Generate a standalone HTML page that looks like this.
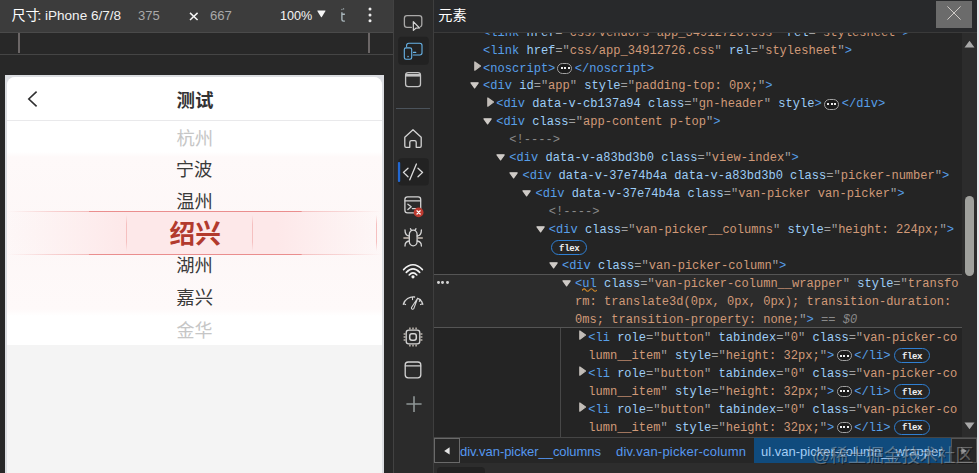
<!DOCTYPE html>
<html><head><meta charset="utf-8"><title>devtools</title>
<style>
html,body{margin:0;padding:0;background:#282828;}
body{width:979px;height:473px;position:relative;overflow:hidden;font-family:"Liberation Sans",sans-serif;}
.abs{position:absolute}
.ln{position:absolute;white-space:pre;font-family:"Liberation Mono",monospace;font-size:12.075px;line-height:18px;height:18px;letter-spacing:0}
.ln b{font-weight:normal}
.ln i{display:inline-block;width:7.245px;height:18px;font-style:normal;vertical-align:top;overflow:visible}
.ln b[style*="italic"] i{font-style:italic}
.t{color:#579fe8}.n{color:#9ccdf7}.v{color:#d19a78}.p{color:#a0a0a0}.m{color:#8a8a8a}
.flex{position:absolute;box-sizing:border-box;width:36.3px;height:15.4px;border:1.1px solid #2f7fd2;border-radius:7.7px;color:#efefef;font:bold 9.1px/13px "Liberation Mono",monospace;text-align:center;letter-spacing:-.42px;padding-left:.3px;padding-top:.9px}
.ui{position:absolute;white-space:pre;font-family:"Liberation Sans",sans-serif;}
</style></head><body>

<!-- ===== left pane ===== -->
<div class="abs" style="left:0;top:0;width:393px;height:473px;background:#282828"></div>
<div class="abs" style="left:0;top:0;width:393px;height:32px;background:#3c3c3c"></div>
<div class="abs" style="left:0;top:32px;width:393px;height:1px;background:#4a4a4a"></div>
<div class="abs" style="left:0;top:54px;width:393px;height:1px;background:#454545"></div>
<div class="abs" style="left:18px;top:33px;width:2px;height:20px;background:#6b6666"></div>
<div class="abs" style="left:368px;top:33px;width:2px;height:20px;background:#6b6666"></div>
<svg style="position:absolute;left:11.80px;top:8.50px;width:27.30px;height:12.60px;overflow:visible"><text x="-0.47" y="11.45" font-family="Liberation Sans, Noto Sans CJK SC, sans-serif" font-size="14" fill="#ffffff">尺寸</text></svg>
<svg class="abs" style="left:37.37px;top:4.00px;overflow:visible" width="6.67" height="21.60"><text x="0" y="16.20" textLength="4.67" lengthAdjust="spacingAndGlyphs" font-family="Liberation Sans, sans-serif" font-size="13.5" fill="#ececec">:</text></svg>
<svg class="abs" style="left:44.99px;top:4.00px;overflow:visible" width="78.10" height="21.60"><text x="0" y="16.20" textLength="76.10" lengthAdjust="spacingAndGlyphs" font-family="Liberation Sans, sans-serif" font-size="13.5" fill="#f2f2f2">iPhone 6/7/8</text></svg>
<svg class="abs" style="left:138.20px;top:4.00px;overflow:visible" width="23.74" height="21.60"><text x="0" y="16.20" textLength="21.74" lengthAdjust="spacingAndGlyphs" font-family="Liberation Sans, sans-serif" font-size="13.5" fill="#a9a9a9">375</text></svg>
<svg class="abs" style="left:210.23px;top:4.00px;overflow:visible" width="23.93" height="21.60"><text x="0" y="16.20" textLength="21.93" lengthAdjust="spacingAndGlyphs" font-family="Liberation Sans, sans-serif" font-size="13.5" fill="#a9a9a9">667</text></svg>
<svg class="abs" style="left:189px;top:12px" width="10" height="9" viewBox="0 0 10 9"><path d="M1 0.9 L8.6 8 M8.6 0.9 L1 8" stroke="#f4f4f4" stroke-width="1.5" fill="none"/></svg>
<svg class="abs" style="left:280.34px;top:4.00px;overflow:visible" width="34.31" height="21.60"><text x="0" y="16.20" textLength="32.31" lengthAdjust="spacingAndGlyphs" font-family="Liberation Sans, sans-serif" font-size="13.5" fill="#f4f4f4">100%</text></svg>
<svg class="abs" style="left:317px;top:10.2px" width="9" height="8" viewBox="0 0 9 8"><path d="M0.5 0.6 H8.3 Q8.7 0.6 8.5 1 L4.8 6.9 Q4.4 7.4 4 6.9 L0.3 1 Q0.1 0.6 0.5 0.6 Z" fill="#f6f6f6"/></svg>
<svg class="abs" style="left:339px;top:7px" width="8" height="16" viewBox="0 0 8 16"><path d="M2.9 5.3 V12.6 Q2.9 14.1 4.5 14.1 H5.9 M2.9 7.3 H5.9" stroke="#a9b6bb" stroke-width="1.4" fill="none"/><path d="M2.4 2.6 L5.8 1.5" stroke="#98a3a7" stroke-width="1.3" stroke-dasharray="1.1 .7" fill="none"/></svg>

<svg class="abs" style="left:366px;top:5px" width="8" height="20" viewBox="0 0 8 20"><circle cx="4" cy="4.1" r="1.5" fill="#ececec"/><circle cx="4" cy="10" r="1.5" fill="#ececec"/><circle cx="4" cy="15.8" r="1.5" fill="#ececec"/></svg>
<!-- device -->
<div class="abs" style="left:5px;top:75px;width:379px;height:398px;background:#dcdee2"></div>
<div class="abs" style="left:7px;top:77px;width:375px;height:396px;background:#f4f4f4;border-radius:8px 8px 0 0"></div>
<div class="abs" style="left:7px;top:77px;width:375px;height:44px;background:#fff;border-radius:8px 8px 0 0"></div>
<div class="abs" style="left:7px;top:120px;width:375px;height:1px;background:#e9e9eb"></div>
<svg class="abs" style="left:26px;top:89px" width="14" height="20" viewBox="0 0 14 20"><path d="M10.6 2.6 L2.8 10 L10.6 17.4" stroke="#2f2f30" stroke-width="1.6" fill="none"/></svg>
<!-- picker -->
<div class="abs" style="left:7px;top:121px;width:375px;height:223.5px;background:#fff"></div>
<div class="abs" style="left:7px;top:152px;width:375px;height:164px;background:linear-gradient(180deg,rgba(254,248,248,0) 0,#fef9f9 5px,#fdf7f7 50%,#fef9f9 calc(100% - 7px),rgba(254,248,248,0) 100%)"></div>
<div class="abs" style="left:7px;top:211.5px;width:375px;height:42.5px;background:linear-gradient(90deg,rgba(253,232,233,0) 0,rgba(253,232,233,.35) 12%,#fde8e9 32%,#fde8e9 72%,rgba(253,232,233,.35) 90%,rgba(253,232,233,0) 100%)"></div>
<div class="abs" style="left:7px;top:211px;width:375px;height:1px;background:linear-gradient(90deg,rgba(236,140,140,0) 0,rgba(236,140,140,.35) 12%,rgba(236,140,140,.55) 21.8%,#ea8e8e 21.9%,#ea8e8e 78.5%,rgba(236,140,140,.5) 78.6%,rgba(236,140,140,.3) 90%,rgba(236,140,140,0) 100%)"></div>
<div class="abs" style="left:7px;top:254px;width:375px;height:1px;background:linear-gradient(90deg,rgba(236,140,140,0) 0,rgba(236,140,140,.35) 12%,rgba(236,140,140,.55) 21.8%,#ea8e8e 21.9%,#ea8e8e 78.5%,rgba(236,140,140,.5) 78.6%,rgba(236,140,140,.3) 90%,rgba(236,140,140,0) 100%)"></div>
<div class="abs" style="left:126px;top:215px;width:1px;height:36px;background:linear-gradient(180deg,rgba(240,170,170,0),#f5c0c0 25%,#f5c0c0 75%,rgba(240,170,170,0))"></div>
<div class="abs" style="left:252px;top:215px;width:1px;height:36px;background:linear-gradient(180deg,rgba(240,170,170,0),#f5c0c0 25%,#f5c0c0 75%,rgba(240,170,170,0))"></div>
<div class="abs" style="left:376px;top:215px;width:1px;height:36px;background:linear-gradient(180deg,rgba(240,170,170,0),#f5c0c0 25%,#f5c0c0 75%,rgba(240,170,170,0))"></div>
<svg style="position:absolute;left:176.60px;top:91.00px;width:36.00px;height:17.21px;overflow:visible"><text x="-0.52" y="15.55" font-family="Liberation Sans, Noto Sans CJK SC, sans-serif" font-size="18.5" font-weight="bold" fill="#323233">测试</text></svg><svg style="position:absolute;left:176.90px;top:129.00px;width:34.30px;height:17.23px;overflow:visible"><text x="-0.59" y="15.63" font-family="Liberation Sans, Noto Sans CJK SC, sans-serif" font-size="18.4" fill="#c6c6c6">杭州</text></svg><svg style="position:absolute;left:177.30px;top:160.60px;width:34.60px;height:16.93px;overflow:visible"><text x="-1.33" y="15.43" font-family="Liberation Sans, Noto Sans CJK SC, sans-serif" font-size="18.3" fill="#3a3a3a">宁波</text></svg><svg style="position:absolute;left:177.20px;top:193.00px;width:34.10px;height:16.64px;overflow:visible"><text x="-0.70" y="15.21" font-family="Liberation Sans, Noto Sans CJK SC, sans-serif" font-size="18.3" fill="#3a3a3a">温州</text></svg><svg style="position:absolute;left:169.50px;top:220.60px;width:50.00px;height:24.14px;overflow:visible"><text x="-0.51" y="21.85" font-family="Liberation Sans, Noto Sans CJK SC, sans-serif" font-size="25.7" font-weight="bold" fill="#b23a2d">绍兴</text></svg><svg style="position:absolute;left:177.20px;top:257.40px;width:34.10px;height:16.74px;overflow:visible"><text x="-0.72" y="15.23" font-family="Liberation Sans, Noto Sans CJK SC, sans-serif" font-size="18.3" fill="#3a3a3a">湖州</text></svg><svg style="position:absolute;left:177.10px;top:289.20px;width:35.10px;height:16.93px;overflow:visible"><text x="-0.72" y="15.44" font-family="Liberation Sans, Noto Sans CJK SC, sans-serif" font-size="18.4" fill="#3a3a3a">嘉兴</text></svg><svg style="position:absolute;left:177.10px;top:321.50px;width:34.60px;height:16.75px;overflow:visible"><text x="-0.54" y="15.31" font-family="Liberation Sans, Noto Sans CJK SC, sans-serif" font-size="18" fill="#c6c6c6">金华</text></svg>

<!-- ===== divider + sidebar ===== -->
<div class="abs" style="left:393px;top:0;width:1px;height:473px;background:#424242"></div>
<div class="abs" style="left:394px;top:0;width:39px;height:473px;background:#2b2b2b"></div>

<svg style="position:absolute;left:394px;top:0" width="39" height="473" viewBox="394 0 39 473" fill="none" stroke="#d4d4d4" stroke-width="1.3" stroke-linecap="round" stroke-linejoin="round">
 <!-- inspect -->
 <path stroke="#aaa9a8" d="M411.4 27.4 H407 a2.6 2.6 0 0 1 -2.6 -2.6 V18.3 a2.6 2.6 0 0 1 2.6 -2.6 H419.2 a2.6 2.6 0 0 1 2.6 2.6 V24.4 a2.6 2.6 0 0 1 -1.3 2.3"/>
 <path stroke="#d2d2d2" stroke-width="1.2" d="M413.3 21.6 L413.4 30.4 L415.8 28.2 L419.5 28 Z" />
 <!-- device toggle (active) -->
 <rect x="398.2" y="36.8" width="30.6" height="28" rx="3.5" fill="#222222" stroke="none"/>
 <g stroke="#68b4e8" stroke-width="1.1">
 <path d="M406.6 46.6 V45.4 a2.2 2.2 0 0 1 2.2 -2.2 H419.8 a2.2 2.2 0 0 1 2.2 2.2 V52.8 a2.2 2.2 0 0 1 -2.2 2.2 H413.3"/>
 <path d="M413.4 52.4 H415.8"/>
 <rect x="404.3" y="47.9" width="7.4" height="11.4" rx="1.7"/>
 <rect x="407.4" y="55.9" width="1.3" height="1.3" fill="#68b4e8" stroke="none"/>
 </g>
 <!-- dock window -->
 <g stroke="#c4c4c4">
 <rect x="405.6" y="72.6" width="14.9" height="14" rx="2.6"/>
 <path d="M406 75.3 H420.2" stroke-width="2.6" stroke-linecap="butt"/>
 </g>
 <!-- separator -->
 <path d="M396 108.5 H430" stroke="#4b535b" stroke-width="1" stroke-linecap="butt"/>
 <!-- home -->
 <path d="M413 129.8 L404.8 137.3 V146 a1.3 1.3 0 0 0 1.3 1.3 H409.8 V142.2 a1.6 1.6 0 0 1 1.6 -1.6 H414.6 a1.6 1.6 0 0 1 1.6 1.6 V147.3 H419.9 a1.3 1.3 0 0 0 1.3 -1.3 V137.3 Z"/>
 <!-- elements active -->
 <rect x="398.2" y="158.2" width="30.6" height="27.2" rx="3.5" fill="#222222" stroke="none"/>
 <rect x="397.9" y="161.9" width="2.3" height="20.1" rx="1" fill="#2268d2" stroke="none"/>
 <path d="M408 168.2 L403.4 172.4 L408 176.8 M416.4 164 L409.8 179.8 M418 168.2 L422.6 172.4 L418 176.8" stroke="#dcdcdc"/>
 <!-- console -->
 <rect x="404.9" y="196.9" width="15.8" height="15.9" rx="2.6"/>
 <path d="M405 200.9 H420.6" stroke-width="1.1"/>
 <path d="M407.9 204.2 L411.2 206.8 L407.9 209.5 M412.4 208.6 H416.2"/>
 <circle cx="418.6" cy="212.4" r="4.9" fill="#bd3a30" stroke="none"/>
 <path d="M417 210.8 L420.2 214 M420.2 210.8 L417 214" stroke="#fff" stroke-width="1.25"/>
 <!-- bug -->
 <path d="M409.3 234.4 a3.9 4.3 0 0 1 7.8 0 V241.6 a3.9 4.3 0 0 1 -7.8 0 Z"/>
 <path d="M411.4 230.4 L410.4 228.7 M415 230.4 L416 228.7 M409.2 236 Q405 235.6 405 230 M417.2 236 Q421.4 235.6 421.4 230 M409.2 241 Q405 241.4 405 246 M417.2 241 Q421.4 241.4 421.4 246"/>
 <path d="M403.4 238 H409 M417.4 238 H422.8" stroke="#c9bfb5" stroke-width="1.7" stroke-linecap="butt"/>
 <!-- wifi -->
 <path d="M403.6 269.6 Q413 260 422.4 269.6 M406.3 272.4 Q413 265.4 419.7 272.4 M409.2 275 Q413 270.8 416.8 275" stroke="#f2f2f2" stroke-width="1.6"/>
 <circle cx="413" cy="276.8" r="1.6" fill="#f2f2f2" stroke="none"/>
 <!-- gauge -->
 <path d="M403.3 304.3 A10.4 10.4 0 0 1 414.6 297 M418.6 298.6 A10.4 10.4 0 0 1 422.8 304.3" />
 <path d="M412.5 297.3 V299.6 M403.6 303.8 L405.6 304.6 M422.5 303.8 L420.5 304.6 M419.3 301.4 L420.6 299.4" stroke-width="1.1"/>
 <path d="M417.6 298.2 L413.9 308.4 a1.25 1.25 0 0 1 -2.4 -0.9 Z" stroke-width="1.1"/>
 <!-- cpu -->
 <rect x="406.2" y="330.2" width="13.6" height="13.6" rx="2.6"/>
 <rect x="409.7" y="333.7" width="6.6" height="6.6" rx="2.2" stroke-width="1.5"/>
 <path d="M409.9 327.6 V329.6 M413 327.6 V329.6 M416.1 327.6 V329.6 M409.9 344.4 V346.4 M413 344.4 V346.4 M416.1 344.4 V346.4 M403.6 333.9 H405.6 M403.6 337 H405.6 M403.6 340.1 H405.6 M420.4 333.9 H422.4 M420.4 337 H422.4 M420.4 340.1 H422.4" stroke="#bdb6ae" stroke-width="1.5" stroke-linecap="butt"/>
 <!-- application -->
 <rect x="405.2" y="362" width="15.6" height="15.8" rx="3"/>
 <path d="M405.4 365.9 H420.6" stroke-width="1.2"/>
 <!-- plus -->
 <path d="M406.4 404 H421.6 M414 396.3 V411.9" stroke="#8f9696" stroke-width="1.6" stroke-linecap="butt"/>
</svg>
<div class="abs" style="left:433px;top:0;width:1px;height:473px;background:#3e3e3e"></div>

<!-- ===== main panel ===== -->
<div class="abs" style="left:434px;top:0;width:543px;height:473px;background:#242424"></div>
<div class="abs" id="tree" style="left:434px;top:0;width:543px;height:438px;overflow:hidden">
 <div class="abs" style="left:-434px;top:0;width:979px;height:473px">
  <div class="abs" style="left:434px;top:274px;width:528px;height:54px;background:#2c2c2c;border-top:1px solid #555;border-bottom:1px solid #555;box-sizing:border-box"></div>
  <div class="abs" style="left:560px;top:328px;width:1px;height:110px;background:#474747"></div>
  <i class="abs" style="left:437px;top:281px;width:2.8px;height:2.8px;border-radius:50%;background:#d2d2d2"></i>
  <i class="abs" style="left:441.4px;top:281px;width:2.8px;height:2.8px;border-radius:50%;background:#d2d2d2"></i>
  <i class="abs" style="left:445.8px;top:281px;width:2.8px;height:2.8px;border-radius:50%;background:#d2d2d2"></i>
  <div class="ln" style="left:483.00px;top:23.64px"><b class="t"><i>&lt;</i><i>l</i><i>i</i><i>n</i><i>k</i></b><b class="n"><i> </i><i>h</i><i>r</i><i>e</i><i>f</i></b><b class="p"><i>=</i><i>"</i></b><b class="v"><i>c</i><i>s</i><i>s</i><i>/</i><i>v</i><i>e</i><i>n</i><i>d</i><i>o</i><i>r</i><i>s</i><i>~</i><i>a</i><i>p</i><i>p</i><i>_</i><i>3</i><i>4</i><i>9</i><i>1</i><i>2</i><i>7</i><i>2</i><i>6</i><i>.</i><i>c</i><i>s</i><i>s</i></b><b class="p"><i>"</i></b><b class="n"><i> </i><i>r</i><i>e</i><i>l</i></b><b class="p"><i>=</i><i>"</i></b><b class="v"><i>s</i><i>t</i><i>y</i><i>l</i><i>e</i><i>s</i><i>h</i><i>e</i><i>e</i><i>t</i></b><b class="p"><i>"</i></b><b class="t"><i>&gt;</i></b></div><div class="ln" style="left:483.00px;top:41.59px"><b class="t"><i>&lt;</i><i>l</i><i>i</i><i>n</i><i>k</i></b><b class="n"><i> </i><i>h</i><i>r</i><i>e</i><i>f</i></b><b class="p"><i>=</i><i>"</i></b><b class="v"><i>c</i><i>s</i><i>s</i><i>/</i><i>a</i><i>p</i><i>p</i><i>_</i><i>3</i><i>4</i><i>9</i><i>1</i><i>2</i><i>7</i><i>2</i><i>6</i><i>.</i><i>c</i><i>s</i><i>s</i></b><b class="p"><i>"</i></b><b class="n"><i> </i><i>r</i><i>e</i><i>l</i></b><b class="p"><i>=</i><i>"</i></b><b class="v"><i>s</i><i>t</i><i>y</i><i>l</i><i>e</i><i>s</i><i>h</i><i>e</i><i>e</i><i>t</i></b><b class="p"><i>"</i></b><b class="t"><i>&gt;</i></b></div><div class="ln" style="left:483.00px;top:59.54px"><b class="t"><i>&lt;</i><i>n</i><i>o</i><i>s</i><i>c</i><i>r</i><i>i</i><i>p</i><i>t</i><i>&gt;</i></b></div><div class="ln" style="left:574.75px;top:59.54px"><b class="t"><i>&lt;</i><i>/</i><i>n</i><i>o</i><i>s</i><i>c</i><i>r</i><i>i</i><i>p</i><i>t</i><i>&gt;</i></b></div><div class="ln" style="left:483.00px;top:77.49px"><b class="t"><i>&lt;</i><i>d</i><i>i</i><i>v</i></b><b class="n"><i> </i><i>i</i><i>d</i></b><b class="p"><i>=</i><i>"</i></b><b class="v"><i>a</i><i>p</i><i>p</i></b><b class="p"><i>"</i></b><b class="n"><i> </i><i>s</i><i>t</i><i>y</i><i>l</i><i>e</i></b><b class="p"><i>=</i><i>"</i></b><b class="v"><i>p</i><i>a</i><i>d</i><i>d</i><i>i</i><i>n</i><i>g</i><i>-</i><i>t</i><i>o</i><i>p</i><i>:</i><i> </i><i>0</i><i>p</i><i>x</i><i>;</i></b><b class="p"><i>"</i></b><b class="t"><i>&gt;</i></b></div><div class="ln" style="left:496.15px;top:95.44px"><b class="t"><i>&lt;</i><i>d</i><i>i</i><i>v</i></b><b class="n"><i> </i><i>d</i><i>a</i><i>t</i><i>a</i><i>-</i><i>v</i><i>-</i><i>c</i><i>b</i><i>1</i><i>3</i><i>7</i><i>a</i><i>9</i><i>4</i></b><b class="n"><i> </i><i>c</i><i>l</i><i>a</i><i>s</i><i>s</i></b><b class="p"><i>=</i><i>"</i></b><b class="v"><i>g</i><i>n</i><i>-</i><i>h</i><i>e</i><i>a</i><i>d</i><i>e</i><i>r</i></b><b class="p"><i>"</i></b><b class="n"><i> </i><i>s</i><i>t</i><i>y</i><i>l</i><i>e</i></b><b class="t"><i>&gt;</i></b></div><div class="ln" style="left:841.77px;top:95.44px"><b class="t"><i>&lt;</i><i>/</i><i>d</i><i>i</i><i>v</i><i>&gt;</i></b></div><div class="ln" style="left:496.15px;top:113.39px"><b class="t"><i>&lt;</i><i>d</i><i>i</i><i>v</i></b><b class="n"><i> </i><i>c</i><i>l</i><i>a</i><i>s</i><i>s</i></b><b class="p"><i>=</i><i>"</i></b><b class="v"><i>a</i><i>p</i><i>p</i><i>-</i><i>c</i><i>o</i><i>n</i><i>t</i><i>e</i><i>n</i><i>t</i><i> </i><i>p</i><i>-</i><i>t</i><i>o</i><i>p</i></b><b class="p"><i>"</i></b><b class="t"><i>&gt;</i></b></div><div class="ln" style="left:509.30px;top:131.34px"><b class="m"><i>&lt;</i><i>!</i><i>-</i><i>-</i><i>-</i><i>-</i><i>&gt;</i></b></div><div class="ln" style="left:509.30px;top:149.29px"><b class="t"><i>&lt;</i><i>d</i><i>i</i><i>v</i></b><b class="n"><i> </i><i>d</i><i>a</i><i>t</i><i>a</i><i>-</i><i>v</i><i>-</i><i>a</i><i>8</i><i>3</i><i>b</i><i>d</i><i>3</i><i>b</i><i>0</i></b><b class="n"><i> </i><i>c</i><i>l</i><i>a</i><i>s</i><i>s</i></b><b class="p"><i>=</i><i>"</i></b><b class="v"><i>v</i><i>i</i><i>e</i><i>w</i><i>-</i><i>i</i><i>n</i><i>d</i><i>e</i><i>x</i></b><b class="p"><i>"</i></b><b class="t"><i>&gt;</i></b></div><div class="ln" style="left:522.45px;top:167.24px"><b class="t"><i>&lt;</i><i>d</i><i>i</i><i>v</i></b><b class="n"><i> </i><i>d</i><i>a</i><i>t</i><i>a</i><i>-</i><i>v</i><i>-</i><i>3</i><i>7</i><i>e</i><i>7</i><i>4</i><i>b</i><i>4</i><i>a</i></b><b class="n"><i> </i><i>d</i><i>a</i><i>t</i><i>a</i><i>-</i><i>v</i><i>-</i><i>a</i><i>8</i><i>3</i><i>b</i><i>d</i><i>3</i><i>b</i><i>0</i></b><b class="n"><i> </i><i>c</i><i>l</i><i>a</i><i>s</i><i>s</i></b><b class="p"><i>=</i><i>"</i></b><b class="v"><i>p</i><i>i</i><i>c</i><i>k</i><i>e</i><i>r</i><i>-</i><i>n</i><i>u</i><i>m</i><i>b</i><i>e</i><i>r</i></b><b class="p"><i>"</i></b><b class="t"><i>&gt;</i></b></div><div class="ln" style="left:535.60px;top:185.19px"><b class="t"><i>&lt;</i><i>d</i><i>i</i><i>v</i></b><b class="n"><i> </i><i>d</i><i>a</i><i>t</i><i>a</i><i>-</i><i>v</i><i>-</i><i>3</i><i>7</i><i>e</i><i>7</i><i>4</i><i>b</i><i>4</i><i>a</i></b><b class="n"><i> </i><i>c</i><i>l</i><i>a</i><i>s</i><i>s</i></b><b class="p"><i>=</i><i>"</i></b><b class="v"><i>v</i><i>a</i><i>n</i><i>-</i><i>p</i><i>i</i><i>c</i><i>k</i><i>e</i><i>r</i><i> </i><i>v</i><i>a</i><i>n</i><i>-</i><i>p</i><i>i</i><i>c</i><i>k</i><i>e</i><i>r</i></b><b class="p"><i>"</i></b><b class="t"><i>&gt;</i></b></div><div class="ln" style="left:548.75px;top:203.14px"><b class="m"><i>&lt;</i><i>!</i><i>-</i><i>-</i><i>-</i><i>-</i><i>&gt;</i></b></div><div class="ln" style="left:548.75px;top:221.09px"><b class="t"><i>&lt;</i><i>d</i><i>i</i><i>v</i></b><b class="n"><i> </i><i>c</i><i>l</i><i>a</i><i>s</i><i>s</i></b><b class="p"><i>=</i><i>"</i></b><b class="v"><i>v</i><i>a</i><i>n</i><i>-</i><i>p</i><i>i</i><i>c</i><i>k</i><i>e</i><i>r</i><i>_</i><i>_</i><i>c</i><i>o</i><i>l</i><i>u</i><i>m</i><i>n</i><i>s</i></b><b class="p"><i>"</i></b><b class="n"><i> </i><i>s</i><i>t</i><i>y</i><i>l</i><i>e</i></b><b class="p"><i>=</i><i>"</i></b><b class="v"><i>h</i><i>e</i><i>i</i><i>g</i><i>h</i><i>t</i><i>:</i><i> </i><i>2</i><i>2</i><i>4</i><i>p</i><i>x</i><i>;</i></b><b class="p"><i>"</i></b><b class="t"><i>&gt;</i></b></div><div class="ln" style="left:561.90px;top:256.99px"><b class="t"><i>&lt;</i><i>d</i><i>i</i><i>v</i></b><b class="n"><i> </i><i>c</i><i>l</i><i>a</i><i>s</i><i>s</i></b><b class="p"><i>=</i><i>"</i></b><b class="v"><i>v</i><i>a</i><i>n</i><i>-</i><i>p</i><i>i</i><i>c</i><i>k</i><i>e</i><i>r</i><i>-</i><i>c</i><i>o</i><i>l</i><i>u</i><i>m</i><i>n</i></b><b class="p"><i>"</i></b><b class="t"><i>&gt;</i></b></div><div class="ln" style="left:575.05px;top:274.94px"><b class="t"><i>&lt;</i></b><b class="t"><i>u</i><i>l</i></b><b class="n"><i> </i><i>c</i><i>l</i><i>a</i><i>s</i><i>s</i></b><b class="p"><i>=</i><i>"</i></b><b class="v"><i>v</i><i>a</i><i>n</i><i>-</i><i>p</i><i>i</i><i>c</i><i>k</i><i>e</i><i>r</i><i>-</i><i>c</i><i>o</i><i>l</i><i>u</i><i>m</i><i>n</i><i>_</i><i>_</i><i>w</i><i>r</i><i>a</i><i>p</i><i>p</i><i>e</i><i>r</i></b><b class="p"><i>"</i></b><b class="n"><i> </i><i>s</i><i>t</i><i>y</i><i>l</i><i>e</i></b><b class="p"><i>=</i><i>"</i></b><b class="v"><i>t</i><i>r</i><i>a</i><i>n</i><i>s</i><i>f</i><i>o</i></b></div><div class="ln" style="left:575.05px;top:292.89px"><b class="v"><i>r</i><i>m</i><i>:</i><i> </i><i>t</i><i>r</i><i>a</i><i>n</i><i>s</i><i>l</i><i>a</i><i>t</i><i>e</i><i>3</i><i>d</i><i>(</i><i>0</i><i>p</i><i>x</i><i>,</i><i> </i><i>0</i><i>p</i><i>x</i><i>,</i><i> </i><i>0</i><i>p</i><i>x</i><i>)</i><i>;</i><i> </i><i>t</i><i>r</i><i>a</i><i>n</i><i>s</i><i>i</i><i>t</i><i>i</i><i>o</i><i>n</i><i>-</i><i>d</i><i>u</i><i>r</i><i>a</i><i>t</i><i>i</i><i>o</i><i>n</i><i>:</i></b></div><div class="ln" style="left:575.05px;top:310.84px"><b class="v"><i>0</i><i>m</i><i>s</i><i>;</i><i> </i><i>t</i><i>r</i><i>a</i><i>n</i><i>s</i><i>i</i><i>t</i><i>i</i><i>o</i><i>n</i><i>-</i><i>p</i><i>r</i><i>o</i><i>p</i><i>e</i><i>r</i><i>t</i><i>y</i><i>:</i><i> </i><i>n</i><i>o</i><i>n</i><i>e</i><i>;</i></b><b class="p"><i>"</i></b><b class="t"><i>&gt;</i></b><b class="m"><i> </i><i>=</i><i>=</i><i> </i></b><b style="color:#8a8a8a;font-style:italic"><i>$</i><i>0</i></b></div><div class="ln" style="left:588.20px;top:328.79px"><b class="t"><i>&lt;</i><i>l</i><i>i</i></b><b class="n"><i> </i><i>r</i><i>o</i><i>l</i><i>e</i></b><b class="p"><i>=</i><i>"</i></b><b class="v"><i>b</i><i>u</i><i>t</i><i>t</i><i>o</i><i>n</i></b><b class="p"><i>"</i></b><b class="n"><i> </i><i>t</i><i>a</i><i>b</i><i>i</i><i>n</i><i>d</i><i>e</i><i>x</i></b><b class="p"><i>=</i><i>"</i></b><b class="v"><i>0</i></b><b class="p"><i>"</i></b><b class="n"><i> </i><i>c</i><i>l</i><i>a</i><i>s</i><i>s</i></b><b class="p"><i>=</i><i>"</i></b><b class="v"><i>v</i><i>a</i><i>n</i><i>-</i><i>p</i><i>i</i><i>c</i><i>k</i><i>e</i><i>r</i><i>-</i><i>c</i><i>o</i></b></div><div class="ln" style="left:588.20px;top:346.74px"><b class="v"><i>l</i><i>u</i><i>m</i><i>n</i><i>_</i><i>_</i><i>i</i><i>t</i><i>e</i><i>m</i></b><b class="p"><i>"</i></b><b class="n"><i> </i><i>s</i><i>t</i><i>y</i><i>l</i><i>e</i></b><b class="p"><i>=</i><i>"</i></b><b class="v"><i>h</i><i>e</i><i>i</i><i>g</i><i>h</i><i>t</i><i>:</i><i> </i><i>3</i><i>2</i><i>p</i><i>x</i><i>;</i></b><b class="p"><i>"</i></b><b class="t"><i>&gt;</i></b></div><div class="ln" style="left:854.23px;top:346.74px"><b class="t"><i>&lt;</i><i>/</i><i>l</i><i>i</i><i>&gt;</i></b></div><div class="ln" style="left:588.20px;top:364.69px"><b class="t"><i>&lt;</i><i>l</i><i>i</i></b><b class="n"><i> </i><i>r</i><i>o</i><i>l</i><i>e</i></b><b class="p"><i>=</i><i>"</i></b><b class="v"><i>b</i><i>u</i><i>t</i><i>t</i><i>o</i><i>n</i></b><b class="p"><i>"</i></b><b class="n"><i> </i><i>t</i><i>a</i><i>b</i><i>i</i><i>n</i><i>d</i><i>e</i><i>x</i></b><b class="p"><i>=</i><i>"</i></b><b class="v"><i>0</i></b><b class="p"><i>"</i></b><b class="n"><i> </i><i>c</i><i>l</i><i>a</i><i>s</i><i>s</i></b><b class="p"><i>=</i><i>"</i></b><b class="v"><i>v</i><i>a</i><i>n</i><i>-</i><i>p</i><i>i</i><i>c</i><i>k</i><i>e</i><i>r</i><i>-</i><i>c</i><i>o</i></b></div><div class="ln" style="left:588.20px;top:382.64px"><b class="v"><i>l</i><i>u</i><i>m</i><i>n</i><i>_</i><i>_</i><i>i</i><i>t</i><i>e</i><i>m</i></b><b class="p"><i>"</i></b><b class="n"><i> </i><i>s</i><i>t</i><i>y</i><i>l</i><i>e</i></b><b class="p"><i>=</i><i>"</i></b><b class="v"><i>h</i><i>e</i><i>i</i><i>g</i><i>h</i><i>t</i><i>:</i><i> </i><i>3</i><i>2</i><i>p</i><i>x</i><i>;</i></b><b class="p"><i>"</i></b><b class="t"><i>&gt;</i></b></div><div class="ln" style="left:854.23px;top:382.64px"><b class="t"><i>&lt;</i><i>/</i><i>l</i><i>i</i><i>&gt;</i></b></div><div class="ln" style="left:588.20px;top:400.59px"><b class="t"><i>&lt;</i><i>l</i><i>i</i></b><b class="n"><i> </i><i>r</i><i>o</i><i>l</i><i>e</i></b><b class="p"><i>=</i><i>"</i></b><b class="v"><i>b</i><i>u</i><i>t</i><i>t</i><i>o</i><i>n</i></b><b class="p"><i>"</i></b><b class="n"><i> </i><i>t</i><i>a</i><i>b</i><i>i</i><i>n</i><i>d</i><i>e</i><i>x</i></b><b class="p"><i>=</i><i>"</i></b><b class="v"><i>0</i></b><b class="p"><i>"</i></b><b class="n"><i> </i><i>c</i><i>l</i><i>a</i><i>s</i><i>s</i></b><b class="p"><i>=</i><i>"</i></b><b class="v"><i>v</i><i>a</i><i>n</i><i>-</i><i>p</i><i>i</i><i>c</i><i>k</i><i>e</i><i>r</i><i>-</i><i>c</i><i>o</i></b></div><div class="ln" style="left:588.20px;top:418.54px"><b class="v"><i>l</i><i>u</i><i>m</i><i>n</i><i>_</i><i>_</i><i>i</i><i>t</i><i>e</i><i>m</i></b><b class="p"><i>"</i></b><b class="n"><i> </i><i>s</i><i>t</i><i>y</i><i>l</i><i>e</i></b><b class="p"><i>=</i><i>"</i></b><b class="v"><i>h</i><i>e</i><i>i</i><i>g</i><i>h</i><i>t</i><i>:</i><i> </i><i>3</i><i>2</i><i>p</i><i>x</i><i>;</i></b><b class="p"><i>"</i></b><b class="t"><i>&gt;</i></b></div><div class="ln" style="left:854.23px;top:418.54px"><b class="t"><i>&lt;</i><i>/</i><i>l</i><i>i</i><i>&gt;</i></b></div>
  <svg style="position:absolute;left:473.90px;top:61.05px" width="7.4" height="10.2" viewBox="0 0 7.4 10.2"><path d="M0.8 1 V9.2 L6.5 5.1 Z" fill="#c2bdb8" stroke="#c2bdb8" stroke-width="1.2" stroke-linejoin="round"/></svg><div style="position:absolute;left:557.45px;top:62.80px;width:13px;height:9.2px;border:1px solid #a2a2a2;background:#1b1b1b;border-radius:5.7px;box-sizing:content-box"><i style="position:absolute;left:2.3px;top:3.5px;width:2px;height:2.1px;background:#ececec"></i><i style="position:absolute;left:5.5px;top:3.5px;width:2.2px;height:2.1px;background:#ececec"></i><i style="position:absolute;left:9.1px;top:3.5px;width:2px;height:2.1px;background:#ececec"></i></div><svg style="position:absolute;left:469.80px;top:82.40px" width="9.2" height="6.8" viewBox="0 0 9.2 6.8"><path d="M1 0.8 H8.2 L4.6 5.8999999999999995 Z" fill="#cfcbc7" stroke="#cfcbc7" stroke-width="1.2" stroke-linejoin="round"/></svg><svg style="position:absolute;left:486.90px;top:96.95px" width="7.4" height="10.2" viewBox="0 0 7.4 10.2"><path d="M0.8 1 V9.2 L6.5 5.1 Z" fill="#c2bdb8" stroke="#c2bdb8" stroke-width="1.2" stroke-linejoin="round"/></svg><div style="position:absolute;left:824.17px;top:98.70px;width:13px;height:9.2px;border:1px solid #a2a2a2;background:#1b1b1b;border-radius:5.7px;box-sizing:content-box"><i style="position:absolute;left:2.3px;top:3.5px;width:2px;height:2.1px;background:#ececec"></i><i style="position:absolute;left:5.5px;top:3.5px;width:2.2px;height:2.1px;background:#ececec"></i><i style="position:absolute;left:9.1px;top:3.5px;width:2px;height:2.1px;background:#ececec"></i></div><svg style="position:absolute;left:483.00px;top:118.30px" width="9.2" height="6.8" viewBox="0 0 9.2 6.8"><path d="M1 0.8 H8.2 L4.6 5.8999999999999995 Z" fill="#cfcbc7" stroke="#cfcbc7" stroke-width="1.2" stroke-linejoin="round"/></svg><svg style="position:absolute;left:496.10px;top:154.20px" width="9.2" height="6.8" viewBox="0 0 9.2 6.8"><path d="M1 0.8 H8.2 L4.6 5.8999999999999995 Z" fill="#cfcbc7" stroke="#cfcbc7" stroke-width="1.2" stroke-linejoin="round"/></svg><svg style="position:absolute;left:509.20px;top:172.15px" width="9.2" height="6.8" viewBox="0 0 9.2 6.8"><path d="M1 0.8 H8.2 L4.6 5.8999999999999995 Z" fill="#cfcbc7" stroke="#cfcbc7" stroke-width="1.2" stroke-linejoin="round"/></svg><svg style="position:absolute;left:522.40px;top:190.10px" width="9.2" height="6.8" viewBox="0 0 9.2 6.8"><path d="M1 0.8 H8.2 L4.6 5.8999999999999995 Z" fill="#cfcbc7" stroke="#cfcbc7" stroke-width="1.2" stroke-linejoin="round"/></svg><svg style="position:absolute;left:535.50px;top:226.00px" width="9.2" height="6.8" viewBox="0 0 9.2 6.8"><path d="M1 0.8 H8.2 L4.6 5.8999999999999995 Z" fill="#cfcbc7" stroke="#cfcbc7" stroke-width="1.2" stroke-linejoin="round"/></svg><div class="flex" style="left:550.90px;top:239.75px">flex</div><svg style="position:absolute;left:548.70px;top:261.90px" width="9.2" height="6.8" viewBox="0 0 9.2 6.8"><path d="M1 0.8 H8.2 L4.6 5.8999999999999995 Z" fill="#cfcbc7" stroke="#cfcbc7" stroke-width="1.2" stroke-linejoin="round"/></svg><svg style="position:absolute;left:562.00px;top:279.85px" width="9.2" height="6.8" viewBox="0 0 9.2 6.8"><path d="M1 0.8 H8.2 L4.6 5.8999999999999995 Z" fill="#cfcbc7" stroke="#cfcbc7" stroke-width="1.2" stroke-linejoin="round"/></svg><svg style="position:absolute;left:581.79px;top:288.35px" width="15" height="4" viewBox="0 0 15 4"><path d="M0 2.6 Q1.9 -0.6 3.75 2 T7.5 2 T11.25 2 T15 2" fill="none" stroke="#d38a2a" stroke-width="1.1"/></svg><svg style="position:absolute;left:579.10px;top:330.30px" width="7.4" height="10.2" viewBox="0 0 7.4 10.2"><path d="M0.8 1 V9.2 L6.5 5.1 Z" fill="#c2bdb8" stroke="#c2bdb8" stroke-width="1.2" stroke-linejoin="round"/></svg><div style="position:absolute;left:836.73px;top:350.00px;width:13px;height:9.2px;border:1px solid #a2a2a2;background:#1b1b1b;border-radius:5.7px;box-sizing:content-box"><i style="position:absolute;left:2.3px;top:3.5px;width:2px;height:2.1px;background:#ececec"></i><i style="position:absolute;left:5.5px;top:3.5px;width:2.2px;height:2.1px;background:#ececec"></i><i style="position:absolute;left:9.1px;top:3.5px;width:2px;height:2.1px;background:#ececec"></i></div><div class="flex" style="left:893.76px;top:347.80px">flex</div><svg style="position:absolute;left:579.10px;top:366.20px" width="7.4" height="10.2" viewBox="0 0 7.4 10.2"><path d="M0.8 1 V9.2 L6.5 5.1 Z" fill="#c2bdb8" stroke="#c2bdb8" stroke-width="1.2" stroke-linejoin="round"/></svg><div style="position:absolute;left:836.73px;top:385.90px;width:13px;height:9.2px;border:1px solid #a2a2a2;background:#1b1b1b;border-radius:5.7px;box-sizing:content-box"><i style="position:absolute;left:2.3px;top:3.5px;width:2px;height:2.1px;background:#ececec"></i><i style="position:absolute;left:5.5px;top:3.5px;width:2.2px;height:2.1px;background:#ececec"></i><i style="position:absolute;left:9.1px;top:3.5px;width:2px;height:2.1px;background:#ececec"></i></div><div class="flex" style="left:893.76px;top:383.70px">flex</div><svg style="position:absolute;left:579.10px;top:402.10px" width="7.4" height="10.2" viewBox="0 0 7.4 10.2"><path d="M0.8 1 V9.2 L6.5 5.1 Z" fill="#c2bdb8" stroke="#c2bdb8" stroke-width="1.2" stroke-linejoin="round"/></svg><div style="position:absolute;left:836.73px;top:421.80px;width:13px;height:9.2px;border:1px solid #a2a2a2;background:#1b1b1b;border-radius:5.7px;box-sizing:content-box"><i style="position:absolute;left:2.3px;top:3.5px;width:2px;height:2.1px;background:#ececec"></i><i style="position:absolute;left:5.5px;top:3.5px;width:2.2px;height:2.1px;background:#ececec"></i><i style="position:absolute;left:9.1px;top:3.5px;width:2px;height:2.1px;background:#ececec"></i></div><div class="flex" style="left:893.76px;top:419.60px">flex</div>
  <!-- scrollbar -->
  <div class="abs" style="left:962px;top:33px;width:15px;height:405px;background:#2c2c2c"></div>
  <div class="abs" style="left:965px;top:196px;width:9px;height:80px;border-radius:4.5px;background:#a0a19d"></div>
  <svg class="abs" style="left:964px;top:40px" width="11" height="8" viewBox="0 0 11 8"><path d="M0.5 7.6 L5.5 0.8 L10.5 7.6 Z" fill="#a9a9a9"/></svg>
  <svg class="abs" style="left:964px;top:422px" width="11" height="8" viewBox="0 0 11 8"><path d="M0.5 0.4 L5.5 7.2 L10.5 0.4 Z" fill="#a9a9a9"/></svg>
 </div>
</div>
<!-- header -->
<div class="abs" style="left:434px;top:0;width:543px;height:32px;background:#28292b"></div>
<div class="abs" style="left:434px;top:32px;width:543px;height:1px;background:#3a3a3a"></div>
<svg style="position:absolute;left:438.90px;top:7.90px;width:27.00px;height:13.40px;overflow:visible"><text x="-0.68" y="12.28" font-family="Liberation Sans, Noto Sans CJK SC, sans-serif" font-size="14.2" fill="#ffffff">元素</text></svg>
<div class="abs" style="left:936px;top:1px;width:36px;height:27px;background:#6b6b6b"></div>
<svg class="abs" style="left:946px;top:5px" width="16" height="16" viewBox="0 0 16 16"><path d="M1.4 1.4 L14.6 14.6 M14.6 1.4 L1.4 14.6" stroke="#e2ddd8" stroke-width="0.85" fill="none"/></svg>

<!-- breadcrumbs -->
<div class="abs" style="left:434px;top:437px;width:543px;height:1px;background:#454545"></div>
<div class="abs" style="left:434px;top:438px;width:543px;height:25px;background:#262626"></div>
<div class="abs" style="left:434px;top:438px;width:26px;height:25px;box-sizing:border-box;border:1px solid #6a6a6a;background:#272727"></div>
<svg class="abs" style="left:443.6px;top:447px" width="6" height="8" viewBox="0 0 6 8"><path d="M5.6 0.2 V7.6 L0.2 3.9 Z" fill="#e4e4e4"/></svg>
<svg class="abs" style="left:460.05px;top:439.80px;overflow:visible" width="143.02" height="20.80"><text x="0" y="15.60" textLength="141.02" lengthAdjust="spacing" font-family="Liberation Sans, sans-serif" font-size="13" fill="#5598f0">div.van-picker__columns</text></svg>
<svg class="abs" style="left:615.95px;top:439.80px;overflow:visible" width="132.09" height="20.80"><text x="0" y="15.60" textLength="130.09" lengthAdjust="spacing" font-family="Liberation Sans, sans-serif" font-size="13" fill="#5598f0">div.van-picker-column</text></svg>
<div class="abs" style="left:754px;top:438px;width:197px;height:25px;background:#104b7d"></div>
<svg class="abs" style="left:761.16px;top:439.80px;overflow:visible" width="183.66" height="20.80"><text x="0" y="15.60" textLength="181.66" lengthAdjust="spacing" font-family="Liberation Sans, sans-serif" font-size="13" fill="#a3cdf5">ul.van-picker-column__wrapper</text></svg>
<div class="abs" style="left:951px;top:438px;width:26px;height:25px;box-sizing:border-box;border:1px solid #555;background:#272727"></div>
<svg class="abs" style="left:961px;top:447px" width="6" height="8" viewBox="0 0 6 8"><path d="M0.4 0.2 V7.6 L5.8 3.9 Z" fill="#9a9a9a"/></svg>
<div class="abs" style="left:434px;top:463px;width:543px;height:10px;background:#2d2d2d"></div>
<div class="abs" style="left:437px;top:466.6px;width:48px;height:12px;border-radius:4px;background:#222"></div>
<svg style="position:absolute;left:813.60px;top:448.20px;width:158.50px;height:18.32px;overflow:visible" opacity="0.38"><text x="-1.0" y="15.22" font-family="Liberation Sans, Noto Sans CJK SC, sans-serif" font-size="17.9" fill="#000">@稀土掘金技术社区</text></svg><svg style="position:absolute;left:812.60px;top:447.20px;width:158.50px;height:18.32px;overflow:visible" opacity="0.38"><text x="-1.0" y="15.22" font-family="Liberation Sans, Noto Sans CJK SC, sans-serif" font-size="17.9" fill="#d0d0d0">@稀土掘金技术社区</text></svg>
<!-- right light strip -->
<div class="abs" style="left:977px;top:0;width:2px;height:473px;background:#e4e6ea"></div>
</body></html>
